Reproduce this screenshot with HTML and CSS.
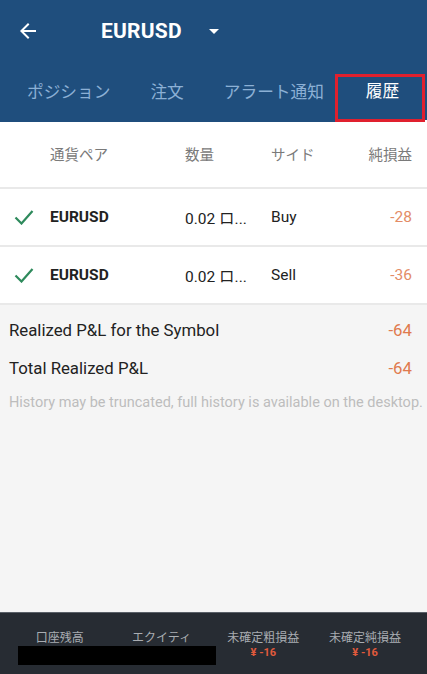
FILE: index.html
```html
<!DOCTYPE html>
<html lang="ja">
<head>
<meta charset="utf-8">
<link rel="stylesheet" href="styles.css">
</head>
<body>
<div class="app">
  <header class="header">
    <div class="topbar">
      <svg class="back" width="24" height="24" viewBox="0 0 24 24"><path d="M20 11H7.83l5.59-5.59L12 4l-8 8 8 8 1.41-1.41L7.83 13H20v-2z" fill="#fff"/></svg>
      <span class="symbol">EURUSD</span>
      <svg class="caret" width="24" height="24" viewBox="0 0 24 24"><path d="M7 10l5 5 5-5z" fill="#fff"/></svg>
    </div>
    <nav class="tabs">
      <span class="tab">ポジション</span>
      <span class="tab">注文</span>
      <span class="tab">アラート通知</span>
      <span class="tab active">履歴</span>
    </nav>
  </header>

  <div class="table">
    <div class="row head">
      <span></span>
      <span>通貨ペア</span>
      <span>数量</span>
      <span>サイド</span>
      <span class="num">純損益</span>
    </div>
    <div class="row">
      <svg class="check" width="20" height="16" viewBox="0 0 20 16"><path d="M1.5 8.5l6 6L18.5 2" fill="none" stroke="#2e8a5c" stroke-width="2.2"/></svg>
      <span class="pair">EURUSD</span>
      <span>0.02 ロ...</span>
      <span>Buy</span>
      <span class="num loss">-28</span>
    </div>
    <div class="row">
      <svg class="check" width="20" height="16" viewBox="0 0 20 16"><path d="M1.5 8.5l6 6L18.5 2" fill="none" stroke="#2e8a5c" stroke-width="2.2"/></svg>
      <span class="pair">EURUSD</span>
      <span>0.02 ロ...</span>
      <span>Sell</span>
      <span class="num loss">-36</span>
    </div>
  </div>

  <section class="summary">
    <div class="sum-row"><span>Realized P&amp;L for the Symbol</span><span class="loss2">-64</span></div>
    <div class="sum-row"><span>Total Realized P&amp;L</span><span class="loss2">-64</span></div>
    <p class="note">History may be truncated, full history is available on the desktop.</p>
  </section>

  <footer class="footer">
    <div class="stat"><span class="label">口座残高</span><span class="val">&nbsp;</span></div>
    <div class="stat"><span class="label">エクイティ</span><span class="val">&nbsp;</span></div>
    <div class="stat"><span class="label">未確定粗損益</span><span class="val">¥ -16</span></div>
    <div class="stat"><span class="label">未確定純損益</span><span class="val">¥ -16</span></div>
    <div class="redact"></div>
  </footer>
</div>
</body>
</html>
```

FILE: styles.css
```css
* { box-sizing: border-box; }
html, body { margin: 0; padding: 0; }
body {
  width: 427px;
  height: 674px;
  overflow: hidden;
  font-family: Roboto, "Noto Sans CJK JP", sans-serif;
  background: #f5f5f5;
}
.app {
  height: 674px;
  display: flex;
  flex-direction: column;
}
.header {
  background: #1f4e7d;
  color: #fff;
}
.topbar {
  height: 62px;
  display: flex;
  align-items: center;
  padding-left: 16px;
}
.back { margin-right: 61px; }
.symbol {
  font-size: 21px;
  font-weight: 700;
  letter-spacing: 0.2px;
}
.caret { margin-left: 20px; }
.tabs {
  height: 60px;
  display: flex;
  align-items: stretch;
  padding-left: 7px;
}
.tab {
  font-family: "Noto Sans CJK JP", sans-serif;
  font-size: 16.7px;
  color: #8cb0d5;
  padding: 0 20px;
  display: flex;
  align-items: center;
  padding-bottom: 2px;
}
.tab.active {
  flex: 1;
  justify-content: center;
  color: #fff;
  position: relative;
  border-bottom: 2px solid #fff;
  margin-left: -6px;
}
.tab.active::after {
  content: "";
  position: absolute;
  left: -3px;
  right: 2px;
  top: 12px;
  bottom: -2px;
  border: 3px solid #e0202e;
}
.table {
  background: #fff;
}
.row {
  display: grid;
  grid-template-columns: 50px 135px 86px 1fr auto;
  align-items: center;
  height: 58px;
  padding-right: 15px;
  border-bottom: 2px solid #e9e9e9;
  font-size: 15.5px;
  color: #222;
}
.row.head {
  height: 67px;
  font-family: "Noto Sans CJK JP", sans-serif;
  font-size: 14.5px;
  color: #7a7a7a;
  padding-bottom: 2px;
}
.check { margin-left: 14px; }
.pair { font-weight: 700; }
.num { text-align: right; }
.loss { color: #e38c66; }
.summary {
  padding: 6px 15px 0 9px;
}
.sum-row {
  display: flex;
  justify-content: space-between;
  align-items: center;
  height: 38px;
  font-size: 16.8px;
  color: #222;
}
.loss2 { color: #e07a4e; }
.note {
  margin: 7px 0 0;
  font-size: 14.5px;
  color: #bdbdbd;
  white-space: nowrap;
}
.footer {
  margin-top: auto;
  height: 62px;
  background: #272c33;
  border-top: 1px solid #5a6068;
  display: grid;
  grid-template-columns: repeat(4, 1fr);
  padding: 0 11px 0 9px;
  position: relative;
}
.stat {
  display: flex;
  flex-direction: column;
  align-items: center;
  padding-top: 17px;
}
.label {
  font-family: "Noto Sans CJK JP", sans-serif;
  font-size: 12px;
  line-height: 14px;
  color: #a9adb2;
}
.val {
  font-size: 11px;
  line-height: 18px;
  font-weight: 700;
  color: #e05a3c;
}
.redact {
  position: absolute;
  left: 18px;
  top: 33px;
  width: 198px;
  height: 19px;
  background: #000;
}
```
